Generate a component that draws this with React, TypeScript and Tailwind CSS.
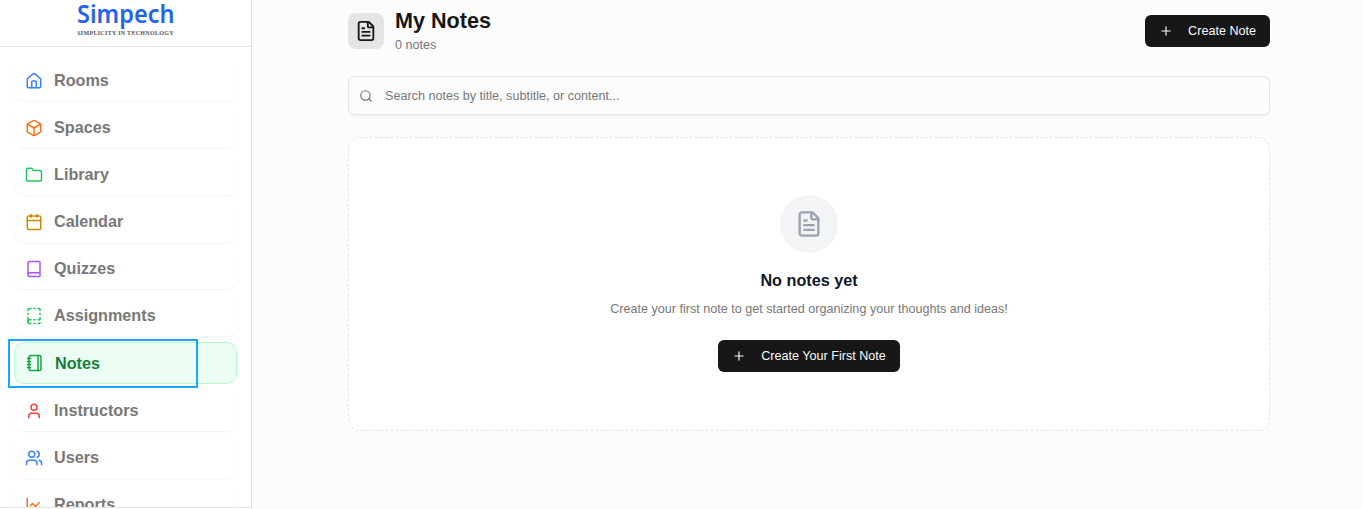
import { Home, Box, Folder, Calendar, Book, BookDashed, Notebook, User, Users, ChartLine, FileText, Search, Plus } from "lucide-react";

const navItems = [
  { label: "Rooms", icon: Home, color: "text-[#3b82f6]" },
  { label: "Spaces", icon: Box, color: "text-[#f97316]" },
  { label: "Library", icon: Folder, color: "text-[#22c55e]" },
  { label: "Calendar", icon: Calendar, color: "text-[#ca8a04]" },
  { label: "Quizzes", icon: Book, color: "text-[#a855f7]" },
  { label: "Assignments", icon: BookDashed, color: "text-[#22c55e]" },
  { label: "Notes", icon: Notebook, color: "text-[#16a34a]", active: true },
  { label: "Instructors", icon: User, color: "text-[#ef4444]" },
  { label: "Users", icon: Users, color: "text-[#3b82f6]" },
  { label: "Reports", icon: ChartLine, color: "text-[#f97316]" },
];

function Sidebar() {
  return (
    <aside className="relative w-[252px] h-full flex-shrink-0 bg-white border-r border-[#e5e5e5] flex flex-col overflow-hidden">
      <div className="h-[47px] flex-shrink-0 border-b border-[#e5e5e5] flex flex-col items-center">
        <p className="text-[#2563eb] text-[24.5px] leading-[28px] font-semibold scale-x-[0.96] font-['Noto_Sans',sans-serif]">Simpech</p>
        <p className="mt-[1px] text-[#52525b] text-[6px] leading-[8px] font-bold tracking-[0.3px] font-['Liberation_Serif',serif] whitespace-nowrap">SIMPLICITY IN TECHNOLOGY</p>
      </div>
      <nav className="flex flex-col gap-[6px] pt-[13px] px-[14px]">
        {navItems.map((item) => (
          <div
            key={item.label}
            className={
              item.active
                ? "h-[42px] flex-shrink-0 flex items-center gap-[11px] pl-[11px] rounded-[10px] bg-[#ecfdf3] border border-[#bbf7d0]"
                : "h-[41px] flex-shrink-0 flex items-center gap-[11px] pl-[11px] rounded-[10px] bg-white shadow-[0_1px_2px_rgba(0,0,0,0.05)]"
            }
          >
            <item.icon className={`w-[18px] h-[18px] flex-shrink-0 ${item.color}`} strokeWidth={2} />
            <span className={item.active ? "text-[16.2px] font-bold text-[#15803d]" : "text-[16.2px] font-bold text-[#787878]"}>{item.label}</span>
          </div>
        ))}
      </nav>
      <div className="absolute left-0 right-0 bottom-0 h-[2px] bg-white border-t border-[#e5e5e5]" />
    </aside>
  );
}

function CreateButton({ label }: { label: string }) {
  return (
    <button className="h-[32px] flex items-center gap-[15px] px-[14px] rounded-[6px] bg-[#171717] text-[#fafafa] text-[12.6px] font-medium">
      <Plus className="w-[14px] h-[14px]" strokeWidth={2} />
      {label}
    </button>
  );
}

function Main() {
  return (
    <main className="flex-1 min-w-0 h-full overflow-hidden pl-[96px] pr-[92px]">
      <div className="flex items-center justify-between h-[62px]">
        <div className="flex items-center gap-[11px]">
          <div className="w-[36px] h-[36px] rounded-[8px] bg-[#e5e5e5] flex items-center justify-center">
            <FileText className="w-[22px] h-[22px] text-[#171717]" strokeWidth={2} />
          </div>
          <div>
            <h1 className="text-[21.6px] leading-[28px] font-bold text-[#171717] -mt-[2px]">My Notes</h1>
            <p className="text-[12.6px] leading-[18px] text-[#787878] mt-[1px]">0 notes</p>
          </div>
        </div>
        <CreateButton label="Create Note" />
      </div>

      <div className="mt-[14px] h-[39px] flex items-center gap-[12px] pl-[10px] rounded-[6px] bg-[#fcfcfc] border border-[#e5e5e5] shadow-[0_1px_2px_rgba(0,0,0,0.05)]">
        <Search className="w-[14px] h-[14px] text-[#737373]" strokeWidth={2} />
        <span className="mt-[1px] text-[12.6px] text-[#787878]">Search notes by title, subtitle, or content...</span>
      </div>

      <div className="mt-[22px] h-[294px] rounded-[12px] bg-white border border-dashed border-[#e5e5e5] flex flex-col items-center pt-[57px]">
        <div className="w-[58px] h-[58px] rounded-full bg-[#f3f4f6] flex items-center justify-center">
          <FileText className="w-[28px] h-[28px] text-[#9ca3af]" strokeWidth={2} />
        </div>
        <h3 className="mt-[14px] text-[16.2px] leading-[26px] font-bold text-[#111827]">No notes yet</h3>
        <p className="mt-[7px] text-[12.6px] leading-[18px] text-[#787878]">Create your first note to get started organizing your thoughts and ideas!</p>
        <div className="mt-[22px]">
          <CreateButton label="Create Your First Note" />
        </div>
      </div>
    </main>
  );
}

export default function App() {
  return (
    <div className="relative w-[1362px] h-[509px] flex overflow-hidden bg-[#fcfcfc] font-['Liberation_Sans',Arial,sans-serif]">
      <Sidebar />
      <Main />
      {/* selection outline over the active nav item */}
      <div className="absolute left-[8px] top-[339px] w-[190px] h-[49px] border-2 border-[#1aa7fb] pointer-events-none" />
    </div>
  );
}
